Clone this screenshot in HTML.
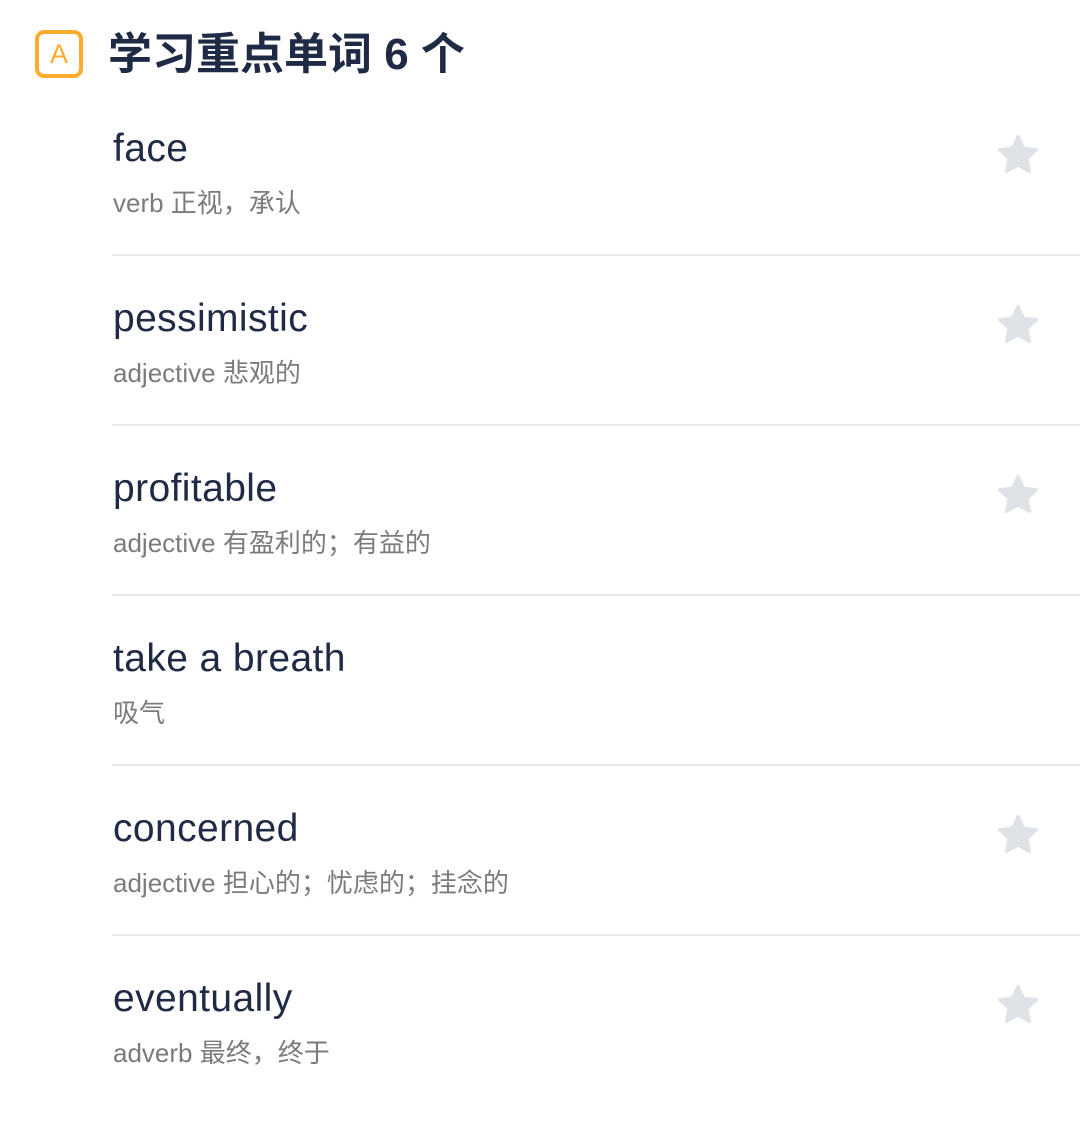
<!DOCTYPE html>
<html><head><meta charset="utf-8"><style>
html,body{margin:0;padding:0;background:#fff;}
body{width:1080px;height:1085px;position:relative;overflow:hidden;font-family:"Liberation Sans","Noto Sans CJK SC",sans-serif;}
.icon{position:absolute;left:35px;top:30px;width:40px;height:40px;border:4px solid #ffab2e;border-radius:9px;color:#ffab2e;font:27px "Liberation Sans",sans-serif;text-align:center;line-height:40px;}
.title{position:absolute;left:108px;top:26px;font-size:44px;font-weight:bold;color:#1f2a44;line-height:58px;font-family:"Liberation Sans","Noto Sans CJK SC",sans-serif;}
.row{position:absolute;left:0;width:1080px;height:170px;}
.w{position:absolute;left:113px;top:-1px;font-size:39px;letter-spacing:0.4px;color:#1f2a44;line-height:46px;}
.m{position:absolute;left:113px;top:61px;font-size:26px;color:#7b7b7b;line-height:30px;}
.line{position:absolute;left:112px;right:0;top:127px;height:2px;background:#e7e9ee;}
.star{position:absolute;left:995px;top:5px;width:46px;height:46px;}
</style></head><body>
<div class="icon">A</div>
<div class="title">学习重点单词 6 个</div>

<div class="row" style="top:127px"><div class="w">face</div><div class="m">verb 正视，承认</div><div class="line"></div>
<svg class="star" viewBox="0 0 24 24"><path d="M12 2.2l2.9 6.2 6.8.8-5 4.7 1.3 6.7L12 17.3l-6 3.3 1.3-6.7-5-4.7 6.8-.8z" fill="#dfe3e8" stroke="#dfe3e8" stroke-width="1.6" stroke-linejoin="round"/></svg></div>

<div class="row" style="top:297px"><div class="w">pessimistic</div><div class="m">adjective 悲观的</div><div class="line"></div>
<svg class="star" viewBox="0 0 24 24"><path d="M12 2.2l2.9 6.2 6.8.8-5 4.7 1.3 6.7L12 17.3l-6 3.3 1.3-6.7-5-4.7 6.8-.8z" fill="#dfe3e8" stroke="#dfe3e8" stroke-width="1.6" stroke-linejoin="round"/></svg></div>

<div class="row" style="top:467px"><div class="w">profitable</div><div class="m">adjective 有盈利的；有益的</div><div class="line"></div>
<svg class="star" viewBox="0 0 24 24"><path d="M12 2.2l2.9 6.2 6.8.8-5 4.7 1.3 6.7L12 17.3l-6 3.3 1.3-6.7-5-4.7 6.8-.8z" fill="#dfe3e8" stroke="#dfe3e8" stroke-width="1.6" stroke-linejoin="round"/></svg></div>

<div class="row" style="top:637px"><div class="w">take a breath</div><div class="m">吸气</div><div class="line"></div></div>

<div class="row" style="top:807px"><div class="w">concerned</div><div class="m">adjective 担心的；忧虑的；挂念的</div><div class="line"></div>
<svg class="star" viewBox="0 0 24 24"><path d="M12 2.2l2.9 6.2 6.8.8-5 4.7 1.3 6.7L12 17.3l-6 3.3 1.3-6.7-5-4.7 6.8-.8z" fill="#dfe3e8" stroke="#dfe3e8" stroke-width="1.6" stroke-linejoin="round"/></svg></div>

<div class="row" style="top:977px"><div class="w">eventually</div><div class="m">adverb 最终，终于</div>
<svg class="star" viewBox="0 0 24 24"><path d="M12 2.2l2.9 6.2 6.8.8-5 4.7 1.3 6.7L12 17.3l-6 3.3 1.3-6.7-5-4.7 6.8-.8z" fill="#dfe3e8" stroke="#dfe3e8" stroke-width="1.6" stroke-linejoin="round"/></svg></div>
</body></html>
